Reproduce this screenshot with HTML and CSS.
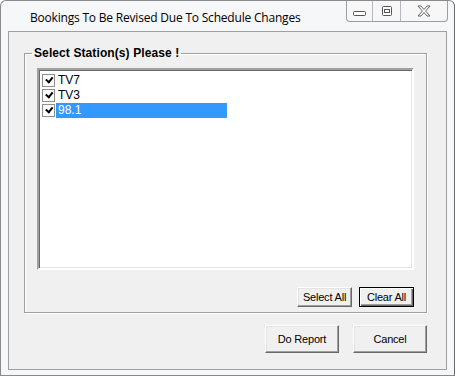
FILE: index.html
```html
<!DOCTYPE html>
<html lang="en">
<head>
    <meta charset="UTF-8">
    <title>Bookings To Be Revised Due To Schedule Changes</title>
    <link rel="stylesheet" href="styles.css">
</head>
<body>

<div class="window">
    <div class="titlebar">
        <span class="title">Bookings To Be Revised Due To Schedule Changes</span>
        <div class="caption-btns">
            <div class="cap-btn min">
                <svg width="13" height="5" viewBox="0 0 13 5"><rect x="0.5" y="0.5" width="12" height="4" rx="1" fill="#fff" stroke="#555"/></svg>
            </div>
            <div class="cap-btn max">
                <svg width="10" height="10" viewBox="0 0 10 10"><rect x="0.5" y="0.5" width="9" height="9" rx="1" fill="#fff" stroke="#555"/><rect x="2.5" y="3.5" width="5" height="3" fill="none" stroke="#555"/></svg>
            </div>
            <div class="cap-btn close">
                <svg width="14" height="12" viewBox="0 0 14 12"><path d="M1 1 L4 1 L7 4.5 L10 1 L13 1 L8.6 6 L13 11 L10 11 L7 7.5 L4 11 L1 11 L5.4 6 Z" fill="#fff" stroke="#666" stroke-linejoin="round"/></svg>
            </div>
        </div>
    </div>

    <div class="client">
        <fieldset class="group">
            <legend>Select Station(s) Please !</legend>
            <div class="listbox">
                <div class="item"><span class="check"></span><span class="label">TV7</span></div>
                <div class="item"><span class="check"></span><span class="label">TV3</span></div>
                <div class="item selected"><span class="check"></span><span class="label">98.1</span></div>
            </div>
            <div class="group-btns">
                <button class="btn small">Select All</button>
                <button class="btn small default">Clear All</button>
            </div>
        </fieldset>
        <div class="dialog-btns">
            <button class="btn big">Do Report</button>
            <button class="btn big">Cancel</button>
        </div>
    </div>
</div>

</body>
</html>
```

FILE: styles.css
```css
body {
    margin: 0;
    background-color: #ffffff;
    font-family: "Liberation Sans", Arial, sans-serif;
}
.window {
    width: 455px;
    height: 376px;
    box-sizing: border-box;
    background-color: #f6f7f8;
    border: 1px solid #8a8a8a;
    border-right-color: #6a6a6a;
    border-radius: 6px 6px 0 0;
    display: flex;
    flex-direction: column;
}
.titlebar {
    height: 30px;
    display: flex;
    align-items: flex-start;
}
.title {
    font-family: "Open Sans", "Noto Sans", sans-serif;
    font-size: 12px;
    color: #000;
    margin: 8px 0 0 29px;
    letter-spacing: -0.2px;
}
.caption-btns {
    margin-left: auto;
    margin-right: 6px;
    display: flex;
    height: 20px;
    border: 1px solid #9aa0a6;
    border-top: none;
    border-radius: 0 0 4px 4px;
    background-color: #f7f7f7;
}
.cap-btn {
    display: flex;
    align-items: center;
    justify-content: center;
}
.cap-btn.min {
    width: 26px;
    border-right: 1px solid #b5b9bd;
    padding-top: 4px;
    box-sizing: border-box;
}
.cap-btn.max {
    width: 27px;
    border-right: 1px solid #b5b9bd;
}
.cap-btn.close {
    width: 46px;
}
.client {
    margin: 0 7px;
    height: 339px;
    box-sizing: border-box;
    border: 1px solid #a0a0a0;
    background-color: #f0f0f0;
    font-size: 11px;
    display: flex;
    flex-direction: column;
}
.group {
    margin: 15px 19px 0 15px;
    padding: 0 12px 5px 12px;
    border: 1px solid #a0a0a0;
    box-shadow: inset 1px 1px 0 #ffffff, 1px 1px 0 #ffffff;
    min-width: 0;
}
.group legend {
    font-weight: bold;
    font-size: 12px;
    line-height: 13px;
    letter-spacing: 0.1px;
    padding: 0 2px;
    margin-left: -5px;
}
.listbox {
    margin-top: 8px;
    height: 202px;
    box-sizing: border-box;
    background-color: #ffffff;
    border: 2px solid;
    border-color: #a0a0a0 #ffffff #ffffff #a0a0a0;
    box-shadow: inset 1px 1px 0 #696969, inset -1px -1px 0 #e3e3e3;
    padding: 3px 0 0 3px;
}
.item {
    height: 15px;
    display: flex;
    align-items: center;
}
.check {
    width: 11px;
    height: 11px;
    border: 1px solid #8e8f8f;
    background-color: #ffffff;
    position: relative;
    flex-shrink: 0;
}
.check::after {
    content: "";
    position: absolute;
    left: 2px;
    top: 1px;
    width: 5px;
    height: 3px;
    border-left: 2px solid #000;
    border-bottom: 2px solid #000;
    transform: rotate(-50deg) translate(0px, 1px);
}
.label {
    margin-left: 1px;
    padding-left: 2px;
    width: 169px;
    height: 15px;
    line-height: 15px;
    font-size: 12px;
    color: #000;
}
.item.selected .label {
    background-color: #3399ff;
    color: #ffffff;
}
.group-btns {
    display: flex;
    justify-content: flex-end;
    gap: 7px;
    margin-top: 17px;
}
.btn {
    font-family: "Liberation Sans", Arial, sans-serif;
    font-size: 11px;
    letter-spacing: -0.2px;
    color: #000;
    background-color: #f0f0f0;
    border: 1px solid;
    border-color: #ffffff #696969 #696969 #ffffff;
    box-shadow: inset -1px -1px 0 #a0a0a0, inset 1px 1px 0 #e3e3e3;
    padding: 0;
    cursor: pointer;
}
.btn.small {
    width: 55px;
    height: 20px;
}
.btn.default {
    border-color: #000;
    box-shadow: inset 1px 1px 0 #ffffff, inset -1px -1px 0 #696969, inset -2px -2px 0 #a0a0a0;
}
.dialog-btns {
    display: flex;
    justify-content: flex-end;
    gap: 14px;
    margin: 12px 19px 0 0;
}
.btn.big {
    width: 74px;
    height: 28px;
}
```
